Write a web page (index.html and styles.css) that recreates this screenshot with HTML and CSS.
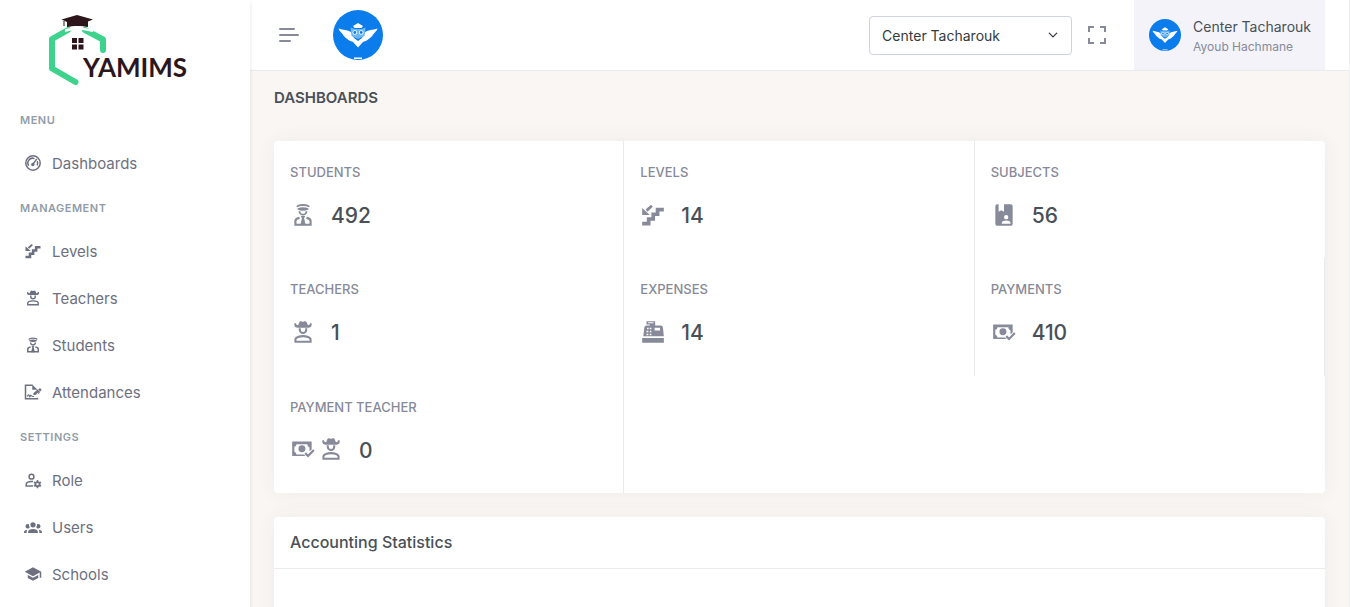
FILE: index.html
```html
<!DOCTYPE html>
<html lang="en">
<head>
    <meta charset="UTF-8">
    <title>Dashboards - YAMIMS</title>
    <link rel="stylesheet" href="styles.css">
</head>
<body>

    <!-- shared icons -->
    <svg class="sprite" aria-hidden="true">
        <symbol id="i-gauge" viewBox="0 0 24 24">
            <g fill="none" stroke="currentColor" stroke-width="2">
                <circle cx="12" cy="12" r="9.6"/>
                <path d="M6.4 15.5A6.2 6.2 0 0 1 14 6.2M17.6 9.6a6.2 6.2 0 0 1 0 5.6"/>
                <path d="M12 13.5l5-7"/>
            </g>
            <circle cx="11.8" cy="14" r="2.3" fill="currentColor"/>
        </symbol>
        <symbol id="i-stairs" viewBox="0 0 24 24">
            <g fill="none" stroke="currentColor" stroke-width="3.4">
                <path d="M2 20h6v-4.300h4.200v-4.400h4V7H22"/>
                <path d="M11 3.500L6 8" stroke-width="2.600"/>
            </g>
            <path d="M2 5.500V12h7z" fill="currentColor"/>
        </symbol>
        <symbol id="i-teacher" viewBox="0 0 24 24">
            <path fill="currentColor" d="M4 4v1.500C4 7 5.500 8 7 8h10c1.500 0 3-1 3-2.500V4h-1.600c0 1.300-.7 1.800-1.900 1.800l-1-2.600C15.200 2.400 14.600 2 14 2c-.8 0-1.200.6-2 .6S10.800 2 10 2c-.6 0-1.200.4-1.500 1.200l-1 2.600c-1.200 0-1.900-.5-1.900-1.800z"/>
            <path fill="none" stroke="currentColor" stroke-width="1.900" d="M9 8.500V10a3 3 0 0 0 6 0V8.500M5 21v-2c0-2.200 4-3.200 7-3.200s7 1 7 3.200v2z"/>
        </symbol>
        <symbol id="i-student" viewBox="0 0 24 24">
            <path fill="none" stroke="currentColor" stroke-width="1.700" d="M6.500 4.600C7 3.400 9.200 2.800 12 2.800s5 .6 5.500 1.800M8 6.400c1.500-1 6.500-1 8 0-1.500 1-6.500 1-8 0zM8.800 8.500a3.200 3.200 0 0 0 6.400 0"/>
            <path fill="none" stroke="currentColor" stroke-width="2" d="M8.800 14.600C6.500 15 5 16 5 17.500V21h14v-3.500c0-1.500-1.500-2.500-3.800-2.900"/>
            <path fill="currentColor" d="M10 13h4l-1 2 1.500 6.500h-5L11 15z"/>
        </symbol>
        <symbol id="i-sign" viewBox="0 0 24 24">
            <g fill="none" stroke="currentColor" stroke-width="2">
                <path d="M18 19.500V21H2V3h9.500"/>
                <path d="M4.500 18c1-3 2-3 2.500-1s1 2 1.500 0 1.500 1 3 1h2" stroke-width="1.500"/>
            </g>
            <path fill="currentColor" d="M11 2l7 7h-7zM12.500 16v-2.500l5.500-5 2.500 2.500-5.200 5zM19 8.500l1.500-1.300c.5-.4 1-.3 1.500.1l1 1c.4.500.4 1 0 1.500l-1.500 1.400zM20.500 11l1 1-2 2.500-1-1z"/>
        </symbol>
        <symbol id="i-role" viewBox="0 0 24 24">
            <g fill="none" stroke="currentColor" stroke-width="2">
                <circle cx="10" cy="7.500" r="3.200"/>
                <path d="M12 14h-2c-4 0-7 1.500-7 3.800V20h9"/>
                <circle cx="18" cy="17.500" r="2.800" stroke-width="2.400"/>
                <path d="M18 12v2.500M18 20.500V23M13.300 14.800l2.200 1.200M20.500 19l2.200 1.200M13.300 20.200l2.200-1.200M20.500 16l2.200-1.200"/>
            </g>
        </symbol>
        <symbol id="i-users" viewBox="0 0 24 24">
            <path fill="currentColor" d="M12 5.500A3.500 3.500 0 0 1 15.500 9 3.500 3.500 0 0 1 12 12.500 3.500 3.500 0 0 1 8.500 9 3.500 3.500 0 0 1 12 5.500M5 8c.56 0 1.080.15 1.530.42-.15 1.430.27 2.850 1.130 3.960C7.160 13.340 6.160 14 5 14a3 3 0 0 1 0-6m14 0a3 3 0 0 1 0 6c-1.160 0-2.160-.66-2.660-1.620.86-1.110 1.280-2.530 1.130-3.960.45-.27.97-.42 1.530-.42M5.500 18.250c0-2.070 2.910-3.750 6.500-3.750s6.500 1.680 6.500 3.750V20h-13v-1.750M0 20v-1.500c0-1.390 1.890-2.560 4.450-2.900-.59.680-.95 1.620-.95 2.650V20H0m24 0h-3.500v-1.750c0-1.030-.36-1.970-.95-2.650 2.560.34 4.450 1.510 4.450 2.900z"/>
        </symbol>
        <symbol id="i-school" viewBox="0 0 24 24">
            <path fill="currentColor" d="M12 3L1 9l11 6 9-4.910V17h2V9M5 13.180v4L12 21l7-3.820v-4L12 17z"/>
        </symbol>
        <symbol id="i-book" viewBox="0 0 24 24">
            <path fill="currentColor" fill-rule="evenodd" d="M6 2h1v7l2.500-1.500L12 9V2h6a2 2 0 0 1 2 2v16a2 2 0 0 1-2 2H6a2 2 0 0 1-2-2V4a2 2 0 0 1 2-2zM14 12a2 2 0 1 0 0 4 2 2 0 0 0 0-4zM10 20h8v-1c0-1.300-2.200-2-4-2s-4 .7-4 2z"/>
        </symbol>
        <symbol id="i-register" viewBox="0 0 24 24">
            <path fill="currentColor" fill-rule="evenodd" d="M6 2h8v4h5c1.200 0 2 .8 2.200 2L22 16H3l1-8c.2-1.200 1-2 2-2h3V5H6zM7.500 3v1h5V3zM6.500 8v1.500H8V8zM9 8v1.500h1.500V8zM6 10.800v1.500h1.700v-1.500zM9 10.800v1.500h1.500v-1.500zM13.500 8v2.500h5V8zM6 13.500V15h1.700v-1.500zM9 13.500V15h1.500v-1.500zM2 17.500h20V22H2z"/>
        </symbol>
        <symbol id="i-cash" viewBox="0 0 24 24">
            <path fill="currentColor" fill-rule="evenodd" d="M2 5h18v7.500l-2 1.500v-3.500A3 3 0 0 1 16 7.500H6a3 3 0 0 1-2 2.500v4.500A3 3 0 0 1 6 17h6.500l2 1.500H2z"/>
            <circle cx="11" cy="11.800" r="3.200" fill="currentColor"/>
            <path fill="none" stroke="currentColor" stroke-width="2" d="M14 15.800l2.700 2.700 5.300-5.500"/>
        </symbol>
        <symbol id="i-owl" viewBox="0 0 50 50">
            <circle cx="25" cy="25" r="25" fill="#0b7ceb"/>
            <path fill="#fff" d="M5.500 18.500c5 1.500 9 1.500 12.500 3.500l3 6 4 3 4-3 3-6c3.500-2 7.500-2 12.500-3.500-1 3-3 4-4 5.500-1.500 3-4 4.500-6 6-2 1-3 1.500-4.500 2L25 37.500 20 32c-1.500-.5-2.500-1-4.500-2-2-1.500-4.500-3-6-6-1-1.500-3-2.500-4-5.500z"/>
            <path fill="#6db6f7" d="M17.500 17.500l4 1.500h7l4-1.500-1 8.500-6.500 3-6.500-3z"/>
            <path fill="#fff" d="M20 16l5-3 5 3-1.500 2h-7zM21 47.500h8v1.500h-8z"/>
            <circle cx="21.800" cy="22.500" r="2.300" fill="#fff"/>
            <circle cx="28.200" cy="22.500" r="2.300" fill="#fff"/>
            <circle cx="21.800" cy="22.500" r="1.400" fill="#0b7ceb"/>
            <circle cx="28.200" cy="22.500" r="1.400" fill="#0b7ceb"/>
        </symbol>
    </svg>

    <aside class="sidebar">
        <a class="brand" href="#">
            <svg width="140" height="72" viewBox="0 0 140 72" role="img" aria-label="YAMIMS">
                <path d="M20 16L4 25v29.500L27.500 68M37 16l18 9.500V36" fill="none" stroke="#3ed38c" stroke-width="6" stroke-linecap="round" stroke-linejoin="round"/>
                <path d="M17 15l12-2 14 2v-2h3l-1 5-16-3-12 3z" fill="#fff"/>
                <path d="M13.500 5.500L29 1l16 4.500-5 2V13c-6-1.500-15-1.500-21 0V8zM15.500 7h1v5h-1z" fill="#2d161b"/>
                <path d="M24 24h5v5h-5zM30.500 24h5v5h-5zM24 30.500h5v5h-5zM30.500 30.500h5v5h-5z" fill="#2d161b"/>
                <text class="brand-text" x="35" y="63">YAMIMS</text>
            </svg>
        </a>

        <nav>
            <h2 class="menu-title">Menu</h2>
            <a class="menu-link" href="#"><svg class="icon"><use href="#i-gauge"/></svg>Dashboards</a>

            <h2 class="menu-title">Management</h2>
            <a class="menu-link" href="#"><svg class="icon"><use href="#i-stairs"/></svg>Levels</a>
            <a class="menu-link" href="#"><svg class="icon"><use href="#i-teacher"/></svg>Teachers</a>
            <a class="menu-link" href="#"><svg class="icon"><use href="#i-student"/></svg>Students</a>
            <a class="menu-link" href="#"><svg class="icon"><use href="#i-sign"/></svg>Attendances</a>

            <h2 class="menu-title">Settings</h2>
            <a class="menu-link" href="#"><svg class="icon"><use href="#i-role"/></svg>Role</a>
            <a class="menu-link" href="#"><svg class="icon"><use href="#i-users"/></svg>Users</a>
            <a class="menu-link" href="#"><svg class="icon"><use href="#i-school"/></svg>Schools</a>
        </nav>
    </aside>

    <div class="page">
        <header class="topbar">
            <button class="icon-button" type="button" aria-label="Toggle menu">
                <svg width="20" height="14" viewBox="0 0 20 14" fill="none" stroke="currentColor" stroke-width="2" stroke-linecap="round">
                    <path d="M1 1h14M1 7h18M1 13h10"/>
                </svg>
            </button>
            <svg class="school-logo"><use href="#i-owl"/></svg>

            <div class="topbar-right">
                <select class="school-select" aria-label="School">
                    <option>Center Tacharouk</option>
                </select>
                <button class="icon-button" type="button" aria-label="Fullscreen">
                    <svg width="18" height="18" viewBox="0 0 18 18" fill="none" stroke="currentColor" stroke-width="2">
                        <path d="M1 6V1h5M12 1h5v5M17 12v5h-5M6 17H1v-5"/>
                    </svg>
                </button>
                <button class="profile" type="button">
                    <svg class="avatar"><use href="#i-owl"/></svg>
                    <span class="profile-text">
                        <span class="profile-name">Center Tacharouk</span>
                        <span class="profile-user">Ayoub Hachmane</span>
                    </span>
                </button>
            </div>
        </header>

        <main class="content">
            <h1>Dashboards</h1>

            <section class="card stats">
                <div class="stat">
                    <h3>Students</h3>
                    <div class="stat-value"><svg class="icon"><use href="#i-student"/></svg><span>492</span></div>
                </div>
                <div class="stat">
                    <h3>Levels</h3>
                    <div class="stat-value"><svg class="icon"><use href="#i-stairs"/></svg><span>14</span></div>
                </div>
                <div class="stat no-border">
                    <h3>Subjects</h3>
                    <div class="stat-value"><svg class="icon"><use href="#i-book"/></svg><span>56</span></div>
                </div>
                <div class="stat">
                    <h3>Teachers</h3>
                    <div class="stat-value"><svg class="icon"><use href="#i-teacher"/></svg><span>1</span></div>
                </div>
                <div class="stat">
                    <h3>Expenses</h3>
                    <div class="stat-value"><svg class="icon"><use href="#i-register"/></svg><span>14</span></div>
                </div>
                <div class="stat">
                    <h3>Payments</h3>
                    <div class="stat-value"><svg class="icon"><use href="#i-cash"/></svg><span>410</span></div>
                </div>
                <div class="stat">
                    <h3>Payment Teacher</h3>
                    <div class="stat-value"><svg class="icon"><use href="#i-cash"/></svg><svg class="icon"><use href="#i-teacher"/></svg><span>0</span></div>
                </div>
            </section>

            <section class="card accounting">
                <h2 class="card-header">Accounting Statistics</h2>
                <div class="card-body"></div>
            </section>
        </main>
    </div>

</body>
</html>
```

FILE: styles.css
```css
* {
    box-sizing: border-box;
}

body {
    margin: 0;
    display: flex;
    height: 100vh;
    overflow: hidden;
    font-family: Inter, "Liberation Sans", sans-serif;
    font-size: 14px;
    color: #495057;
    background-color: #faf6f3;
}

h1, h2, h3 {
    margin: 0;
}

a {
    text-decoration: none;
}

button {
    border: none;
    background: none;
    font-family: inherit;
    cursor: pointer;
}

.sprite {
    display: none;
}

/* sidebar */
.sidebar {
    flex: 0 0 250px;
    background-color: #fff;
    box-shadow: 0 2px 4px rgba(15, 34, 58, 0.12);
    z-index: 1;
}

.brand {
    display: flex;
    justify-content: center;
    height: 99px;
    padding: 14px 14px 0 0;
}

.brand-text {
    font-family: Lato, sans-serif;
    font-size: 26px;
    font-weight: 700;
    fill: #2d161b;
}

.menu-title {
    height: 41px;
    padding: 0 20px;
    font-size: 11px;
    line-height: 43px;
    font-weight: 600;
    letter-spacing: 0.5px;
    text-transform: uppercase;
    color: #919da9;
}

.menu-link {
    display: flex;
    align-items: center;
    gap: 10px;
    height: 47px;
    padding: 0 24px 1px;
    font-size: 15px;
    color: #6d7080;
}

.menu-link .icon {
    width: 18px;
    height: 18px;
}

/* top bar */
.page {
    flex: 1;
    min-width: 0;
    border-right: 1px solid #eff0f2;
}

.topbar {
    display: flex;
    align-items: center;
    height: 71px;
    padding: 0 24px 0 13px;
    background-color: #fff;
    border-bottom: 1px solid #e9ebec;
}

.icon-button {
    display: flex;
    padding: 16px;
    color: #878a99;
}

.school-logo {
    width: 50px;
    height: 50px;
    margin-left: 18px;
}

.topbar-right {
    display: flex;
    align-items: center;
    height: 100%;
    margin-left: auto;
}

.school-select {
    width: 203px;
    height: 39px;
    padding: 0 36px 0 12px;
    appearance: none;
    border: 1px solid #ced4da;
    border-radius: 4px;
    font-family: inherit;
    font-size: 14px;
    color: #343a40;
    background: #fff url("data:image/svg+xml,%3Csvg xmlns='http://www.w3.org/2000/svg' viewBox='0 0 16 16'%3E%3Cpath fill='none' stroke='%23343a40' stroke-width='2' stroke-linecap='round' stroke-linejoin='round' d='M2 5l6 6 6-6'/%3E%3C/svg%3E") no-repeat right 13px center / 10px;
}

.profile {
    display: flex;
    align-items: center;
    gap: 12px;
    height: 100%;
    margin-left: 12px;
    padding: 0 14px 0 15px;
    background-color: #f3f3f9;
    text-align: left;
}

.avatar {
    width: 32px;
    height: 32px;
}

.profile-text {
    padding-top: 3px;
}

.profile-name,
.profile-user {
    display: block;
    line-height: 20px;
}

.profile-name {
    font-size: 14px;
    color: #495057;
}

.profile-user {
    font-size: 12px;
    color: #878a99;
}

/* content */
.content {
    padding: 0 24px;
}

h1 {
    padding: 16px 0 32px;
    font-size: 15px;
    line-height: 22px;
    font-weight: 600;
    text-transform: uppercase;
    color: #495057;
}

.card {
    margin-bottom: 24px;
    background-color: #fff;
    border-radius: 4px;
    box-shadow: 0 0 20px rgba(56, 65, 74, 0.06);
}

.stats {
    display: grid;
    grid-template-columns: repeat(3, 1fr);
    min-height: 352px;
}

.stat {
    padding: 21px 16px 24px;
    border-right: 1px solid #e9ebec;
}

.no-border {
    border-right: none;
}

.stat h3 {
    font-size: 13px;
    line-height: 20px;
    font-weight: 500;
    text-transform: uppercase;
    color: #878a99;
}

.stat-value {
    display: flex;
    align-items: center;
    gap: 2px;
    margin-top: 17px;
    height: 33px;
    font-size: 21px;
    font-weight: 500;
    color: #495057;
}

.stat-value .icon {
    width: 26px;
    height: 26px;
    margin-bottom: 2px;
    color: #878a99;
}

.stat-value span {
    margin-left: 13px;
}

.card-header {
    padding: 16px;
    border-bottom: 1px solid #e9ebec;
    font-size: 16px;
    line-height: 19px;
    font-weight: 500;
}

.card-body {
    height: 350px;
}
```
